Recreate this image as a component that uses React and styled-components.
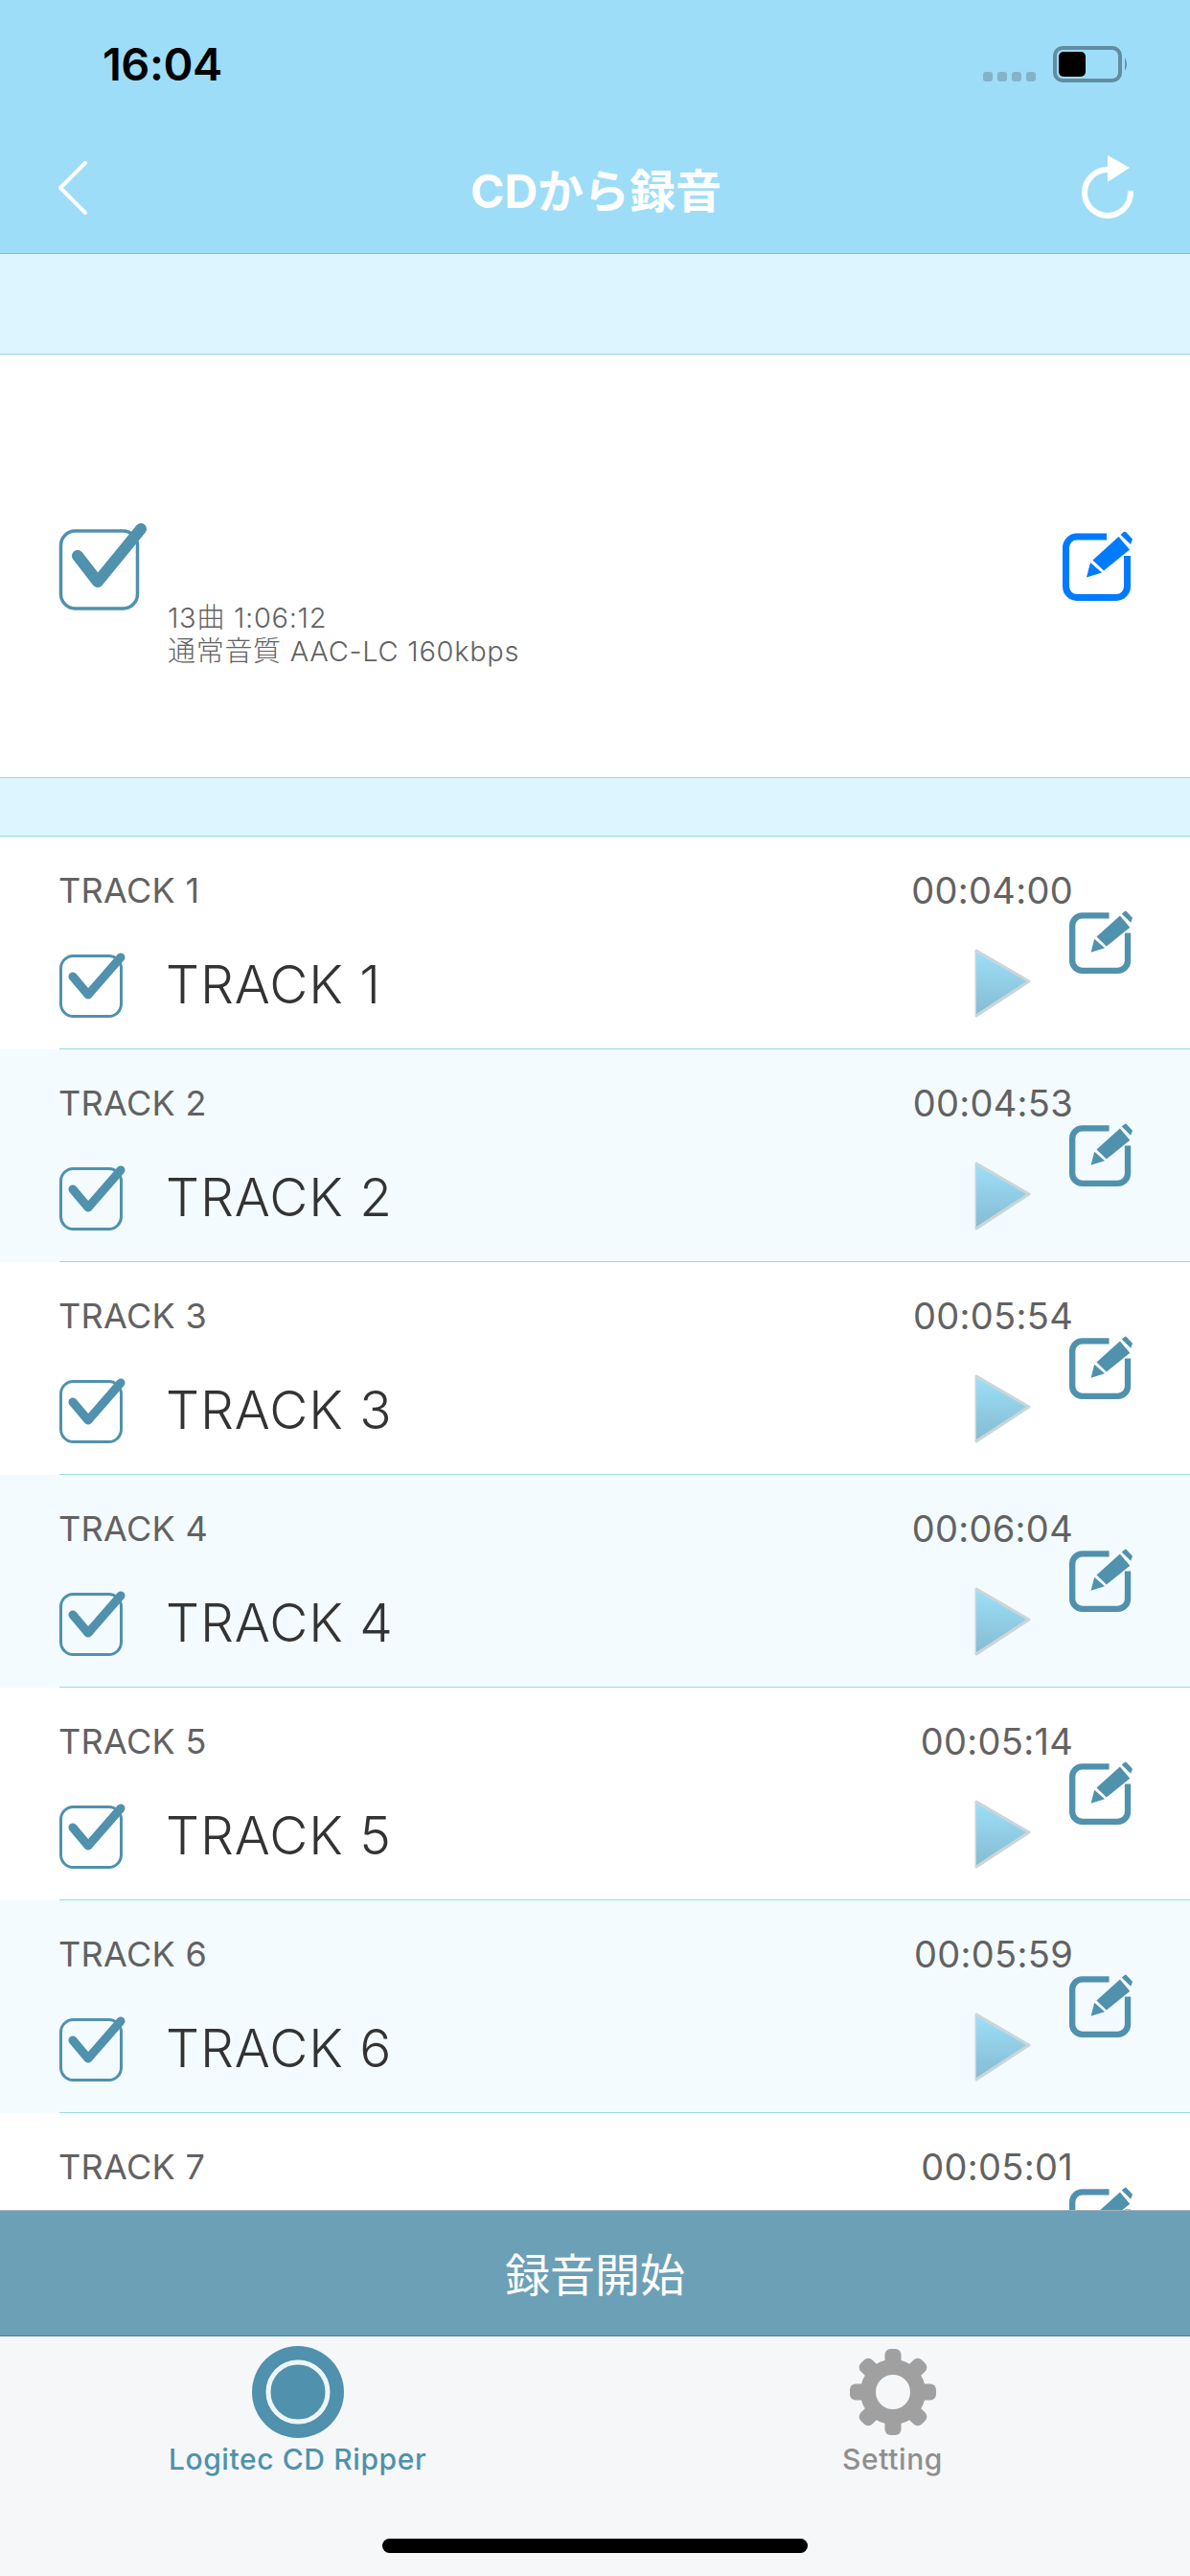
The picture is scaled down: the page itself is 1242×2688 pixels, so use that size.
import styled, { createGlobalStyle } from 'styled-components'

const TRACKS = [
  { name: 'TRACK 1', time: '00:04:00' },
  { name: 'TRACK 2', time: '00:04:53' },
  { name: 'TRACK 3', time: '00:05:54' },
  { name: 'TRACK 4', time: '00:06:04' },
  { name: 'TRACK 5', time: '00:05:14' },
  { name: 'TRACK 6', time: '00:05:59' },
  { name: 'TRACK 7', time: '00:05:01' },
]

const Colors = {
  nav: '#9eddf7',
  band: '#ddf5fe',
  line: '#94dde2',
  alt: '#f3fbfe',
  teal: '#5091ad',
  button: '#6ca0b6',
  text: '#626262',
  dark: '#333333',
  tab: '#f5f7f9',
}

const SANS = `Inter, "Noto Sans CJK JP", sans-serif`

const GlobalStyle = createGlobalStyle`
  html, body {
    margin: 0;
    padding: 0;
    background: #fff;
  }
`

const Screen = styled.main`
  display: flex;
  flex-direction: column;
  width: 1242px;
  height: 2688px;
  overflow: hidden;
  font-family: ${SANS};
`

const Header = styled.header`
  display: flex;
  flex-direction: column;
  height: 264px;
  background: ${Colors.nav};
  border-bottom: 1px solid #9ab8c2;
`
const StatusBar = styled.div`
  display: flex;
  align-items: center;
  justify-content: space-between;
  height: 131px;
  padding: 2px 63px 0 107px;
`
const Clock = styled.span`
  font-size: 47px;
  font-weight: 600;
  color: #000;
  letter-spacing: -0.5px;
`
const StatusRight = styled.div`
  display: flex;
  align-items: flex-end;
  gap: 18px;
`
const Dots = styled.div`
  display: flex;
  gap: 5px;
  margin-bottom: 1px;
`
const Dot = styled.i`
  width: 10px;
  height: 10px;
  border-radius: 3px;
  background: #82b3c8;
`
const Battery = styled.svg`
  display: block;
`
const NavBar = styled.nav`
  display: flex;
  align-items: center;
  height: 130px;
  padding: 0 56px 4px 58px;
`
const NavSlot = styled.div`
  display: flex;
  flex: none;
  width: 60px;
  justify-content: ${props => (props.$end ? 'flex-end' : 'flex-start')};
`
const NavTitle = styled.h1`
  flex: 1;
  margin: 0;
  font-size: 48px;
  font-weight: 700;
  text-align: center;
  color: #fff;
`

const Band = styled.div`
  flex: none;
  height: ${props => props.$height}px;
  background: ${Colors.band};
  border-bottom: 1px solid ${Colors.line};
`

const Album = styled.section`
  display: flex;
  flex: none;
  align-items: center;
  height: 441px;
  padding: 0 60px 0 61px;
  background: #fff;
  border-bottom: 1px solid ${Colors.line};
`
const AlbumInfo = styled.div`
  flex: 1;
  align-self: flex-start;
  margin-left: 22px;
  padding-top: 257px;
  font-size: 29px;
  font-weight: 300;
  line-height: 35px;
  letter-spacing: 0.7px;
  color: ${Colors.text};
`

const TrackList = styled.div`
  flex: 1;
  min-height: 0;
  overflow: hidden;
  background: #fff;
`
const Row = styled.article`
  display: flex;
  height: 222px;
  box-sizing: border-box;
  padding: 0 60px 0 62px;
  position: relative;
  background: ${props => (props.$alt ? Colors.alt : '#fff')};
  box-shadow: inset 0 -1px 0 0 ${Colors.line};
`
const RowCover = styled.i`
  position: absolute;
  left: 0;
  bottom: 0;
  width: 62px;
  height: 1px;
  background: ${props => (props.$alt ? Colors.alt : '#fff')};
`
const RowMain = styled.div`
  flex: 1;
  display: flex;
  flex-direction: column;
  min-width: 0;
`
const RowTop = styled.div`
  display: flex;
  align-items: center;
  justify-content: space-between;
  height: 44px;
  margin-top: 34px;
`
const TrackLabel = styled.span`
  margin-left: -1px;
  font-size: 36px;
  color: ${Colors.text};
  letter-spacing: 0.3px;
`
const TrackTime = styled.span`
  font-size: 38px;
  color: ${Colors.text};
  letter-spacing: 0.3px;
`
const RowBottom = styled.div`
  display: flex;
  align-items: center;
  margin-top: 43px;
  height: 68px;
  margin-left: -1px;
`
const TrackName = styled.span`
  flex: 1;
  margin-left: 42px;
  font-size: 55px;
  font-weight: 300;
  color: ${Colors.dark};
  letter-spacing: 1px;
  position: relative;
  top: -1px;
`
const PlayIcon = styled.svg`
  display: block;
  margin-right: 41px;
`
const EditColumn = styled.div`
  flex: none;
  width: 66px;
  margin-left: -4px;
  padding-top: 77px;
`
const EditIcon = styled.svg`
  display: block;
`

const ActionButton = styled.button`
  flex: none;
  height: 132px;
  padding: 0 0 4px;
  border: none;
  border-top: 1px solid #a5b3b9;
  border-bottom: 1px solid #4f7f96;
  background: ${Colors.button};
  font-family: ${SANS};
  font-size: 47px;
  color: #fff;
`

const TabBar = styled.footer`
  flex: none;
  position: relative;
  display: grid;
  grid-template-columns: 1fr 1fr;
  height: 250px;
  background: ${Colors.tab};
`
const Tab = styled.div`
  display: flex;
  flex-direction: column;
  align-items: center;
  padding-top: 10px;
  color: ${props => (props.$active ? Colors.teal : '#8f8f8f')};
`
const TabIconSlot = styled.div`
  display: flex;
  align-items: center;
  justify-content: center;
  height: 96px;
`
const TabLabel = styled.span`
  margin-top: 4px;
  font-size: 30px;
  font-weight: 500;
  letter-spacing: 0.6px;
`
const HomeIndicator = styled.i`
  position: absolute;
  left: 399px;
  bottom: 24px;
  width: 444px;
  height: 15px;
  border-radius: 8px;
  background: #000;
`

const CheckBox = ({ size, big }) =>
  big ? (
    <svg width="92" height="92" viewBox="0 0 92 92" style={{ flex: 'none' }}>
      <rect x="2.5" y="9" width="80" height="81" rx="15" fill="none" stroke={Colors.teal} strokeWidth="3.5" />
      <path d="M20 35L41 62L86 7" fill="none" stroke={Colors.teal} strokeWidth="12" strokeLinecap="round" strokeLinejoin="round" />
    </svg>
  ) : (
    <svg width={size} height={size} viewBox="0 0 70 70" style={{ flex: 'none' }}>
      <rect x="2.5" y="4.5" width="63" height="63" rx="13" fill="none" stroke={Colors.teal} strokeWidth="3" />
      <path d="M15 26L31 45L65 6" fill="none" stroke={Colors.teal} strokeWidth="9" strokeLinecap="round" strokeLinejoin="round" />
    </svg>
  )

const Edit = ({ width, height, color, strokeWidth = 7 }) => (
  <EditIcon width={width} height={height} viewBox="0 0 73 73">
    <path
      d="M46 6H15A11.5 11.5 0 0 0 3.5 17.5V58A11.5 11.5 0 0 0 15 69.5H56A11.5 11.5 0 0 0 67.5 58V26"
      fill="none"
      stroke={color}
      strokeWidth={strokeWidth}
    />
    <path d="M25 48.5L29 33L41 43.5Z" fill={color} />
    <path d="M31.5 30.5L58.5 6L70 19.5L43 41.5Z" fill={color} />
    <path d="M60.5 4L64 1Q65 0.3 66 1L72.5 8Q73.3 9 72.5 10L71 14Z" fill={color} />
  </EditIcon>
)

const Play = ({ id }) => (
  <PlayIcon width="68" height="80" viewBox="0 0 68 80">
    <defs>
      <linearGradient id={id} x1="0" y1="0" x2="0" y2="1">
        <stop offset="0" stopColor="#9cdff8" />
        <stop offset="1" stopColor="#85bcd3" />
      </linearGradient>
    </defs>
    <path d="M8 4L63 36L8 72Z" fill="#c9d6da" stroke="#c9d6da" strokeWidth="3" strokeLinejoin="round" />
    <path d="M8 6L60 36L8 70Z" fill={`url(#${id})`} />
  </PlayIcon>
)

const GEAR_TEETH = [0, 45, 90, 135, 180, 225, 270, 315]

const Gear = () => (
  <svg width="90" height="90" viewBox="0 0 90 90">
    <circle cx="45" cy="45" r="26" fill="none" stroke="#a0a0a0" strokeWidth="16" />
    {GEAR_TEETH.map(a => (
      <rect key={a} x="36.5" y="0" width="17" height="20" rx="6" fill="#a0a0a0" transform={`rotate(${a} 45 45)`} />
    ))}
  </svg>
)

const Disc = () => (
  <svg width="96" height="96" viewBox="0 0 96 96">
    <circle cx="48" cy="48" r="48" fill={Colors.teal} />
    <circle cx="48" cy="48" r="31" fill="none" stroke="#eef5f8" strokeWidth="5" />
  </svg>
)

export default function App() {
  return (
    <>
      <GlobalStyle />
      <Screen>
        <Header>
          <StatusBar>
            <Clock>16:04</Clock>
            <StatusRight>
              <Dots>
                <Dot />
                <Dot />
                <Dot />
                <Dot />
              </Dots>
              <Battery width="80" height="38" viewBox="0 0 80 38">
                <rect x="2" y="2" width="68" height="34" rx="8" fill="none" stroke="#5f8ea3" strokeWidth="4" />
                <rect x="6" y="6" width="28" height="26" rx="5" fill="#000" />
                <path d="M75 12Q79 19 75 26Z" fill="#5f8ea3" />
              </Battery>
            </StatusRight>
          </StatusBar>
          <NavBar>
            <NavSlot>
              <svg width="36" height="60" viewBox="0 0 36 60">
                <path d="M31 4L5 30L31 56" fill="none" stroke="#fff" strokeWidth="4" strokeLinecap="round" strokeLinejoin="round" />
              </svg>
            </NavSlot>
            <NavTitle>CDから録音</NavTitle>
            <NavSlot $end>
              <svg width="60" height="68" viewBox="0 0 60 68">
                <path d="M54 37V39A24 24 0 1 1 30 15" fill="none" stroke="#fff" strokeWidth="6" />
                <path d="M30 0L53 13L30 28Z" fill="#fff" />
              </svg>
            </NavSlot>
          </NavBar>
        </Header>
        <Band $height={104} />
        <Album>
          <CheckBox big />
          <AlbumInfo>
            <div>13曲 1:06:12</div>
            <div>通常音質 AAC-LC 160kbps</div>
          </AlbumInfo>
          <Edit width={73} height={73} color="#007aff" />
        </Album>
        <Band $height={60} />
        <TrackList>
          {TRACKS.map((track, i) => (
            <Row key={track.name} $alt={i % 2 === 1}>
              <RowMain>
                <RowTop>
                  <TrackLabel>{track.name}</TrackLabel>
                  <TrackTime>{track.time}</TrackTime>
                </RowTop>
                <RowBottom>
                  <CheckBox size={70} />
                  <TrackName>{track.name}</TrackName>
                  <Play id={`play-${i}`} />
                </RowBottom>
              </RowMain>
              <EditColumn>
                <Edit width={66} height={66} color={Colors.teal} />
              </EditColumn>
              <RowCover $alt={i % 2 === 1} />
            </Row>
          ))}
        </TrackList>
        <ActionButton>録音開始</ActionButton>
        <TabBar>
          <Tab $active>
            <TabIconSlot>
              <Disc />
            </TabIconSlot>
            <TabLabel>Logitec CD Ripper</TabLabel>
          </Tab>
          <Tab>
            <TabIconSlot>
              <Gear />
            </TabIconSlot>
            <TabLabel>Setting</TabLabel>
          </Tab>
          <HomeIndicator />
        </TabBar>
      </Screen>
    </>
  )
}
